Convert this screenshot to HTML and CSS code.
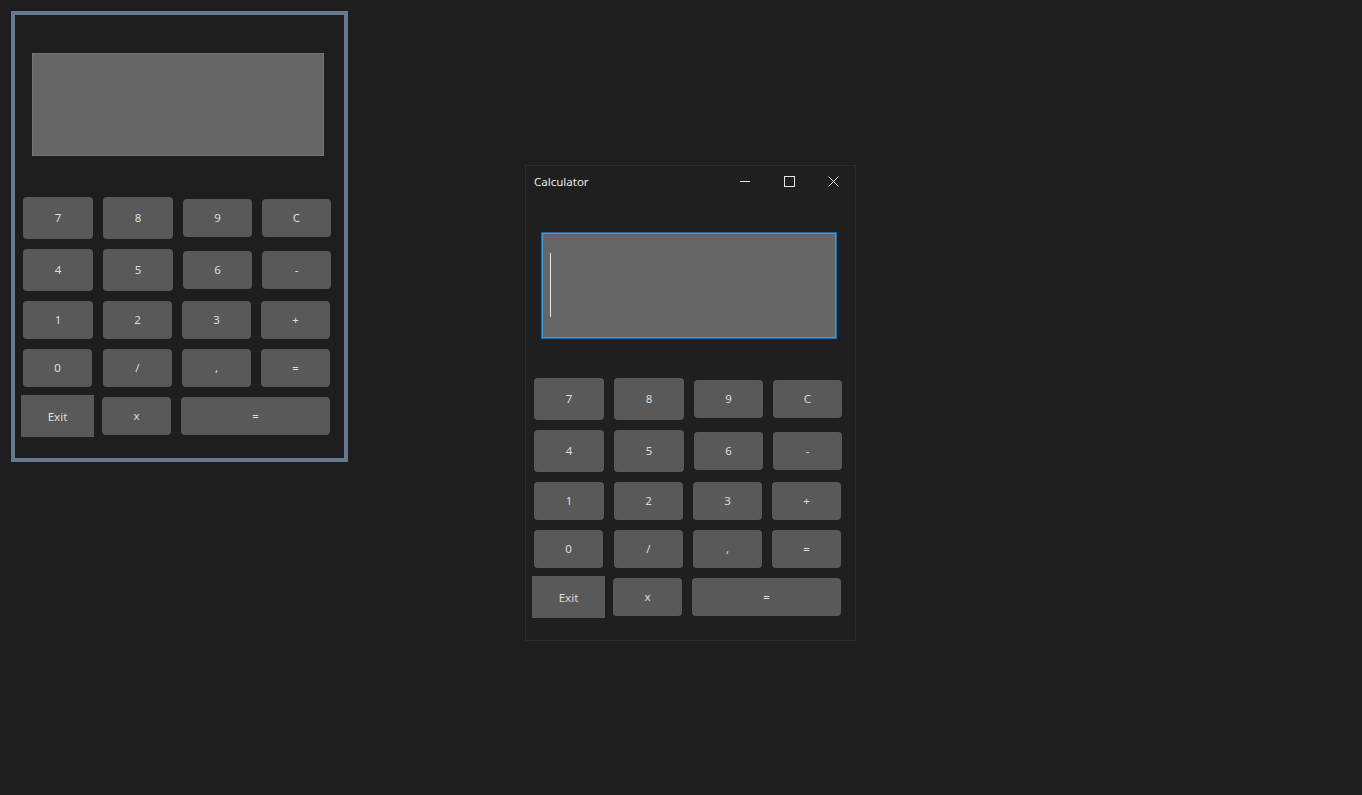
FILE: index.html
```html
<!DOCTYPE html>
<html>
<head>
<meta charset="utf-8">
<title>Calculator</title>
<link rel="stylesheet" href="styles.css">
</head>
<body>
<div class="desk">
  <div class="designer">
    <div class="calc">
      <div class="display"></div>
      <div class="keys">
        <div class="row"><button class="key tall">7</button><button class="key tall">8</button><button class="key">9</button><button class="key">C</button></div>
        <div class="row"><button class="key tall">4</button><button class="key tall">5</button><button class="key">6</button><button class="key">-</button></div>
        <div class="row"><button class="key wide1">1</button><button class="key">2</button><button class="key">3</button><button class="key">+</button></div>
        <div class="row"><button class="key gap1">0</button><button class="key">/</button><button class="key">,</button><button class="key">=</button></div>
        <div class="row last"><button class="key exit">Exit</button><button class="key">x</button><button class="key big">=</button></div>
      </div>
    </div>
  </div>

  <div class="window">
    <div class="titlebar">
      <span class="title">Calculator</span>
      <div class="controls">
        <span class="ctl"><svg width="10" height="10" viewBox="0 0 10 10"><path d="M0 5.5H10" stroke="#e6e6e6" stroke-width="1"/></svg></span>
        <span class="ctl"><svg width="11" height="11" viewBox="0 0 11 11"><rect x="0.5" y="0.5" width="10" height="10" fill="none" stroke="#e6e6e6" stroke-width="1"/></svg></span>
        <span class="ctl"><svg width="11" height="11" viewBox="0 0 11 11"><path d="M0.5 0.5L10.5 10.5M10.5 0.5L0.5 10.5" stroke="#e6e6e6" stroke-width="1"/></svg></span>
      </div>
    </div>
    <div class="calc">
      <div class="display focused"><div class="caret"></div></div>
      <div class="keys">
        <div class="row"><button class="key tall">7</button><button class="key tall">8</button><button class="key">9</button><button class="key">C</button></div>
        <div class="row"><button class="key tall">4</button><button class="key tall">5</button><button class="key">6</button><button class="key">-</button></div>
        <div class="row"><button class="key wide1">1</button><button class="key">2</button><button class="key">3</button><button class="key">+</button></div>
        <div class="row"><button class="key gap1">0</button><button class="key">/</button><button class="key">,</button><button class="key">=</button></div>
        <div class="row last"><button class="key exit">Exit</button><button class="key">x</button><button class="key big">=</button></div>
      </div>
    </div>
  </div>
</div>
</body>
</html>
```

FILE: styles.css
```css
html, body {
  margin: 0;
  padding: 0;
  background: #1e1e1e;
  width: 1362px;
  height: 795px;
  overflow: hidden;
  font-family: "Noto Sans", "Open Sans", sans-serif;
}

.desk {
  position: relative;
  width: 1362px;
  height: 795px;
}

.designer {
  position: absolute;
  left: 11px;
  top: 11px;
  width: 337px;
  height: 451px;
  box-sizing: border-box;
  border: 4px solid #65798f;
  background: #1e1e1e;
}

.window {
  position: absolute;
  left: 525px;
  top: 165px;
  width: 331px;
  height: 476px;
  box-sizing: border-box;
  border: 1px solid #2b2b2b;
  background: #1f1f1f;
  display: flex;
  flex-direction: column;
}

.titlebar {
  height: 30px;
  display: flex;
  align-items: center;
  justify-content: space-between;
}

.title {
  margin-left: 8px;
  font-size: 11.5px;
  color: #ececec;
  margin-top: 1px;
}

.controls {
  display: flex;
  height: 30px;
}

.ctl {
  width: 44px;
  height: 30px;
  display: flex;
  align-items: center;
  justify-content: center;
}

.calc {
  width: 329px;
  height: 443px;
  box-sizing: border-box;
  padding-top: 38px;
  display: flex;
  flex-direction: column;
}

.display {
  margin-left: 17px;
  width: 292px;
  height: 103px;
  box-sizing: border-box;
  border: 1px solid #737373;
  background: #666666;
}

.display.focused {
  border-color: #666666;
  box-shadow: 0 0 0 1px #3a9ce4, 0 0 0 2px #1d6ca6;
  padding: 18px 0 0 6px;
}

.caret {
  width: 1px;
  height: 64px;
  background: #e8e8e8;
}

.keys {
  margin-top: 41px;
  padding-left: 8px;
  display: flex;
  flex-direction: column;
  gap: 10px;
}

.row {
  display: flex;
  align-items: center;
  gap: 10px;
}

.row.last {
  margin-top: -2px;
  margin-left: -2px;
}

.key {
  width: 69px;
  height: 38px;
  padding: 0;
  border: none;
  border-radius: 4px;
  background: #595959;
  color: #dedede;
  font-family: "Noto Sans", "Open Sans", sans-serif;
  font-size: 11.5px;
  line-height: 1;
  display: flex;
  align-items: center;
  justify-content: center;
}

.key.tall {
  width: 70px;
  height: 42px;
}

.key.wide1 {
  width: 70px;
}

.key.gap1 {
  margin-right: 1px;
}

.key.exit {
  width: 73px;
  height: 42px;
  border-radius: 0;
  margin-right: -2px;
  padding-top: 2px;
}

.key.big {
  width: 149px;
}
```
